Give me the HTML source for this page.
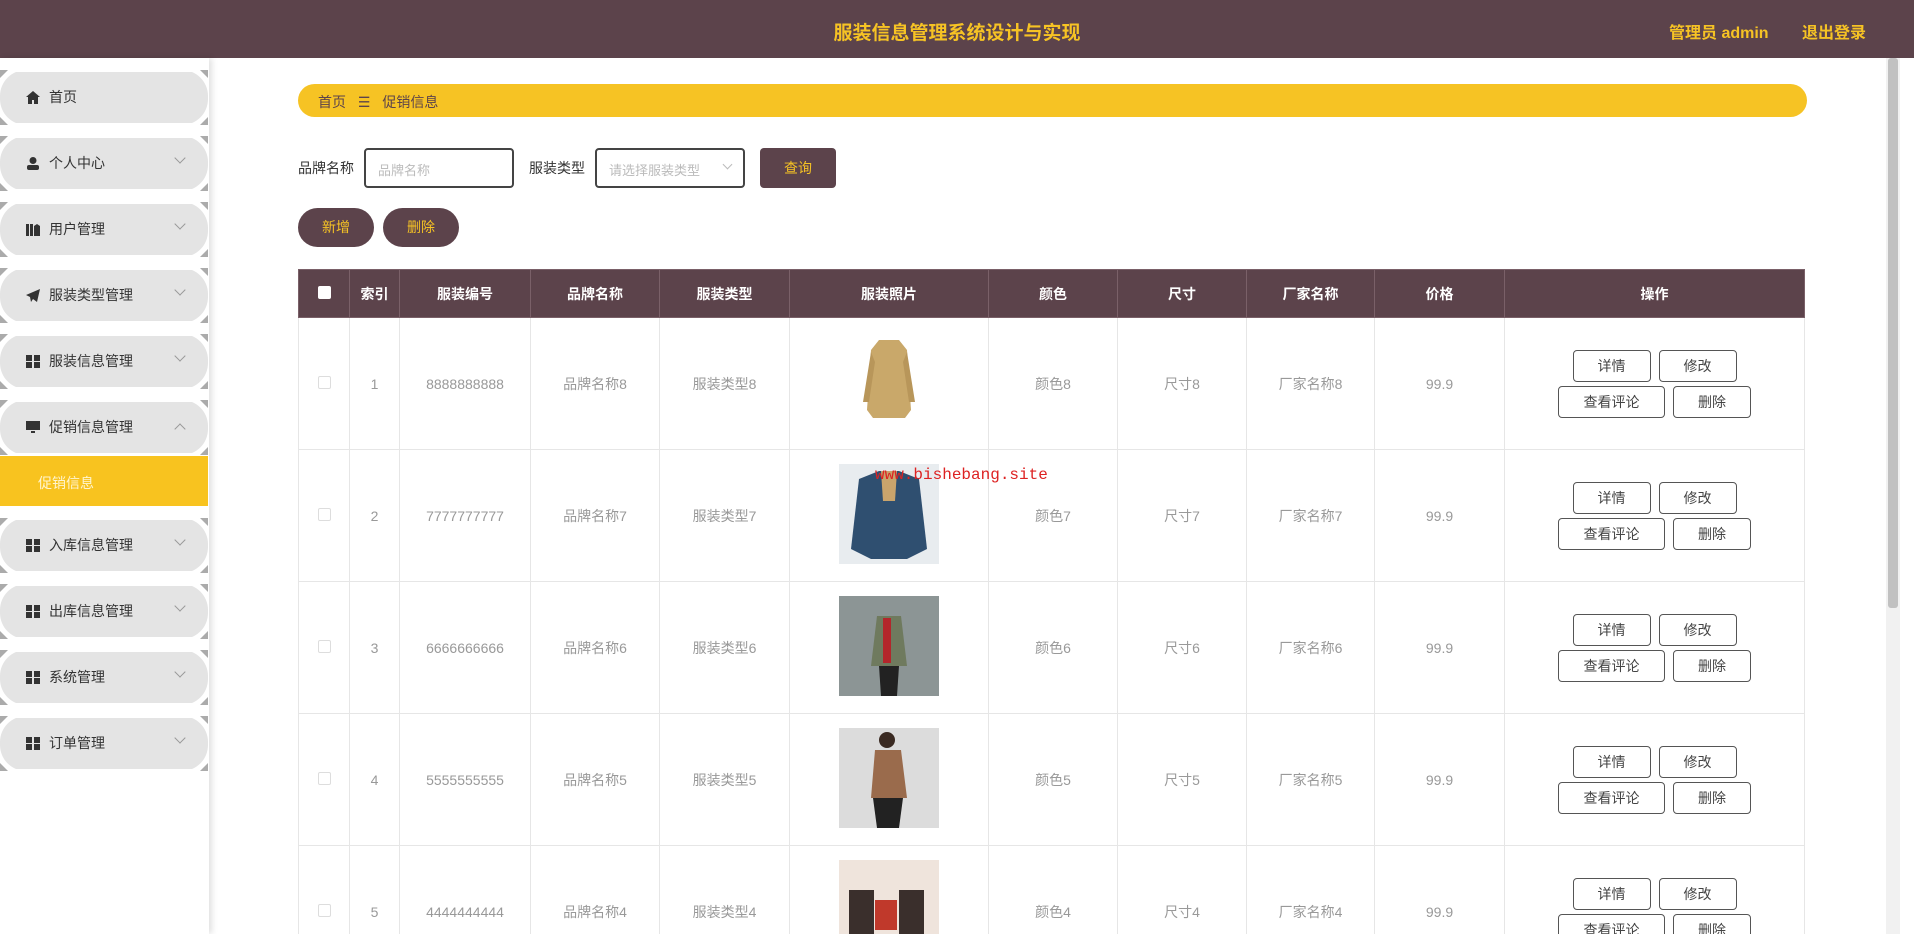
<!DOCTYPE html>
<html style="height:934px;overflow:hidden"><head><meta charset="utf-8"><style>
*{margin:0;padding:0;box-sizing:border-box}
body{width:1914px;height:934px;overflow:hidden;background:#fff;font-family:"Liberation Sans","Noto Sans CJK SC",sans-serif;position:relative;font-size:14px;color:#333}
.hdr{position:absolute;left:0;top:0;width:1914px;height:58px;background:#5c434b}
.hdr .t{position:absolute;left:0;width:1914px;top:18px;text-align:center;color:#f6c324;font-size:19px;font-weight:bold}
.hdr .r{position:absolute;top:19px;color:#f6c324;font-size:16px;font-weight:bold}
.side{position:absolute;left:0;top:58px;width:209px;height:876px;background:#fff;box-shadow:3px 0 6px rgba(0,0,0,.12)}
.it{position:absolute;left:0;width:208px;height:55px;background:#ababab}
.it .in{position:absolute;inset:0;background:#e4e4e4;border-radius:26px;clip-path:polygon(10px 2px,calc(100% - 10px) 2px,100% 12px,100% calc(100% - 12px),calc(100% - 10px) calc(100% - 2px),10px calc(100% - 2px),0 calc(100% - 12px),0 12px)}
.it .bg{position:absolute;inset:0;background:#fff;clip-path:polygon(8px 0,calc(100% - 8px) 0,100% 8px,100% calc(100% - 8px),calc(100% - 8px) 100%,8px 100%,0 calc(100% - 8px),0 8px)}
.it .ic{position:absolute;left:26px;top:21px;width:14px;height:13px}
.it .tx{position:absolute;left:49px;top:17px;font-size:14px;color:#333}
.it .ar{position:absolute;left:176px;top:18px;width:8px;height:8px;border-right:1px solid #999;border-bottom:1px solid #999;transform:rotate(45deg)}
.it .ar.up{top:25px;transform:rotate(-135deg)}
.sub{position:absolute;left:0;top:456px;width:208px;height:50px;background:#f8c31f;color:#fff5d0;font-size:14px;padding:17px 0 0 38px}
.bc{position:absolute;left:298px;top:84px;width:1509px;height:33px;background:#f6c324;border-radius:17px;font-size:14px;padding:8px 0 0 20px;color:#5c434b}
.lbl{position:absolute;top:158px;font-size:14px;color:#333}
.inp{position:absolute;top:148px;height:40px;border:2px solid #444;border-radius:4px;font-size:13px;color:#bbb;padding:10px 0 0 12px}
.btn{position:absolute;background:#5c434b;color:#f6c324;font-size:14px;text-align:center}
table{position:absolute;left:298px;top:269px;width:1506px;border-collapse:collapse;table-layout:fixed}
th{background:#5c434b;color:#fff;height:48px;font-size:14px;font-weight:bold;border:1px solid #7a6068}
td{height:132px;border:1px solid #e6e6e6;text-align:center;color:#999;font-size:14px}
.cb{display:inline-block;width:13px;height:13px;border:1px solid #ddd;border-radius:2px;background:#fff}
th .cb{border:none}
.ob{display:inline-block;border:1px solid #555;border-radius:4px;height:32px;line-height:30px;color:#444;font-size:14px;margin:2px 4px;background:#fff}
.img{display:inline-block;width:100px;height:100px;position:relative}
</style></head><body>
<div class="hdr"><div class="t">服装信息管理系统设计与实现</div><div class="r" style="left:1669px">管理员 admin</div><div class="r" style="left:1802px">退出登录</div></div>

<div class="side"></div>
<div class="it" style="top:70px"><div class="bg"></div><div class="in"></div><svg class="ic" viewBox="0 0 14 13"><path d="M7 0L0 6h2v7h4V9h2v4h4V6h2z" fill="#333"/></svg><div class="tx">首页</div></div>
<div class="it" style="top:136px"><div class="bg"></div><div class="in"></div><svg class="ic" viewBox="0 0 14 13"><circle cx="7" cy="3.5" r="3.5" fill="#333"/><rect x="1" y="8" width="12" height="5" rx="2" fill="#333"/></svg><div class="tx">个人中心</div><div class="ar"></div></div>
<div class="it" style="top:202px"><div class="bg"></div><div class="in"></div><svg class="ic" viewBox="0 0 14 13"><path d="M0 1h3v12H0zM4 1h3v12H4zM8 3l3-2 3 2v10H8z" fill="#333"/></svg><div class="tx">用户管理</div><div class="ar"></div></div>
<div class="it" style="top:268px"><div class="bg"></div><div class="in"></div><svg class="ic" viewBox="0 0 14 13"><path d="M14 0L0 6l4 2 1 5 2-3 4 3z" fill="#333"/></svg><div class="tx">服装类型管理</div><div class="ar"></div></div>
<div class="it" style="top:334px"><div class="bg"></div><div class="in"></div><svg class="ic" viewBox="0 0 14 13"><path d="M0 0h6v6H0zM8 0h6v6H8zM0 7h6v6H0zM8 7h6v6H8z" fill="#333"/></svg><div class="tx">服装信息管理</div><div class="ar"></div></div>
<div class="it" style="top:400px"><div class="bg"></div><div class="in"></div><svg class="ic" viewBox="0 0 14 13"><path d="M0 0h14v9H0zM5 10h4v2H5z" fill="#333"/></svg><div class="tx">促销信息管理</div><div class="ar up"></div></div>
<div class="sub">促销信息</div>
<div class="it" style="top:518px"><div class="bg"></div><div class="in"></div><svg class="ic" viewBox="0 0 14 13"><path d="M0 0h6v6H0zM8 0h6v6H8zM0 7h6v6H0zM8 7h6v6H8z" fill="#333"/></svg><div class="tx">入库信息管理</div><div class="ar"></div></div>
<div class="it" style="top:584px"><div class="bg"></div><div class="in"></div><svg class="ic" viewBox="0 0 14 13"><path d="M0 0h6v6H0zM8 0h6v6H8zM0 7h6v6H0zM8 7h6v6H8z" fill="#333"/></svg><div class="tx">出库信息管理</div><div class="ar"></div></div>
<div class="it" style="top:650px"><div class="bg"></div><div class="in"></div><svg class="ic" viewBox="0 0 14 13"><path d="M0 0h6v6H0zM8 0h6v6H8zM0 7h6v6H0zM8 7h6v6H8z" fill="#333"/></svg><div class="tx">系统管理</div><div class="ar"></div></div>
<div class="it" style="top:716px"><div class="bg"></div><div class="in"></div><svg class="ic" viewBox="0 0 14 13"><path d="M0 0h6v6H0zM8 0h6v6H8zM0 7h6v6H0zM8 7h6v6H8z" fill="#333"/></svg><div class="tx">订单管理</div><div class="ar"></div></div>

<div class="bc">首页 <span style="margin:0 8px">☰</span> 促销信息</div>
<div class="lbl" style="left:298px">品牌名称</div>
<div class="inp" style="left:364px;width:150px">品牌名称</div>
<div class="lbl" style="left:529px">服装类型</div>
<div class="inp" style="left:595px;width:150px">请选择服装类型<span style="position:absolute;right:12px;top:11px;width:7px;height:7px;border-right:1px solid #bbb;border-bottom:1px solid #bbb;transform:rotate(45deg)"></span></div>
<div class="btn" style="left:760px;top:148px;width:76px;height:40px;border-radius:4px;line-height:40px">查询</div>
<div class="btn" style="left:298px;top:208px;width:76px;height:39px;border-radius:20px;line-height:39px">新增</div>
<div class="btn" style="left:383px;top:208px;width:76px;height:39px;border-radius:20px;line-height:39px">删除</div>

<table>
<colgroup><col style="width:51px"><col style="width:50px"><col style="width:131px"><col style="width:129px"><col style="width:130px"><col style="width:199px"><col style="width:129px"><col style="width:129px"><col style="width:128px"><col style="width:130px"><col style="width:300px"></colgroup>
<tr><th><span class="cb"></span></th><th>索引</th><th>服装编号</th><th>品牌名称</th><th>服装类型</th><th>服装照片</th><th>颜色</th><th>尺寸</th><th>厂家名称</th><th>价格</th><th>操作</th></tr>
<tr><td><span class="cb"></span></td><td>1</td><td>8888888888</td><td>品牌名称8</td><td>服装类型8</td><td><span class="img"><svg width="100" height="100"><path d="M40 8h20l8 10 4 60-6 8H34l-6-8 4-60z" fill="#c9a86a"/><path d="M32 20l-8 50h6l6-40zM68 20l8 50h-6l-6-40z" fill="#b8965a"/></svg></span></td><td>颜色8</td><td>尺寸8</td><td>厂家名称8</td><td>99.9</td><td><span class="ob" style="width:78px">详情</span><span class="ob" style="width:78px">修改</span><br><span class="ob" style="width:107px">查看评论</span><span class="ob" style="width:78px">删除</span></td></tr>
<tr><td><span class="cb"></span></td><td>2</td><td>7777777777</td><td>品牌名称7</td><td>服装类型7</td><td><span class="img" style="background:#e8ecef"><svg width="100" height="100"><path d="M20 15l20-8h20l20 8 8 70-20 10H32L12 85z" fill="#2f4f70"/><path d="M42 7h16l-2 30h-12z" fill="#c9a46c"/></svg></span></td><td>颜色7</td><td>尺寸7</td><td>厂家名称7</td><td>99.9</td><td><span class="ob" style="width:78px">详情</span><span class="ob" style="width:78px">修改</span><br><span class="ob" style="width:107px">查看评论</span><span class="ob" style="width:78px">删除</span></td></tr>
<tr><td><span class="cb"></span></td><td>3</td><td>6666666666</td><td>品牌名称6</td><td>服装类型6</td><td><span class="img" style="background:#8c9595"><svg width="100" height="100"><path d="M38 20h24l6 50H32z" fill="#6f7a5e"/><path d="M44 22h8v45h-8z" fill="#b3262b"/><path d="M40 70h20l-2 30h-16z" fill="#222"/></svg></span></td><td>颜色6</td><td>尺寸6</td><td>厂家名称6</td><td>99.9</td><td><span class="ob" style="width:78px">详情</span><span class="ob" style="width:78px">修改</span><br><span class="ob" style="width:107px">查看评论</span><span class="ob" style="width:78px">删除</span></td></tr>
<tr><td><span class="cb"></span></td><td>4</td><td>5555555555</td><td>品牌名称5</td><td>服装类型5</td><td><span class="img" style="background:#dcdcdc"><svg width="100" height="100"><path d="M36 22h26l6 48H32z" fill="#9a6b4c"/><path d="M34 70h30l-4 30H38z" fill="#222"/><circle cx="48" cy="12" r="8" fill="#3a2a22"/></svg></span></td><td>颜色5</td><td>尺寸5</td><td>厂家名称5</td><td>99.9</td><td><span class="ob" style="width:78px">详情</span><span class="ob" style="width:78px">修改</span><br><span class="ob" style="width:107px">查看评论</span><span class="ob" style="width:78px">删除</span></td></tr>
<tr><td><span class="cb"></span></td><td>5</td><td>4444444444</td><td>品牌名称4</td><td>服装类型4</td><td><span class="img" style="background:#efe4dc"><svg width="100" height="100"><path d="M10 30h25v70H10zM60 30h25v70H60z" fill="#3a2f2c"/><path d="M36 40h22v30H36z" fill="#c0392b"/></svg></span></td><td>颜色4</td><td>尺寸4</td><td>厂家名称4</td><td>99.9</td><td><span class="ob" style="width:78px">详情</span><span class="ob" style="width:78px">修改</span><br><span class="ob" style="width:107px">查看评论</span><span class="ob" style="width:78px">删除</span></td></tr>
</table>
<div style="position:absolute;left:875px;top:466px;color:#d22;font-family:'Liberation Mono',monospace;font-size:16px">www.bishebang.site</div>
<div style="position:absolute;left:1886px;top:58px;width:14px;height:876px;background:#f1f1f1"></div>
<div style="position:absolute;left:1888px;top:58px;width:10px;height:550px;background:#c1c1c1;border-radius:3px"></div>
</body></html>
